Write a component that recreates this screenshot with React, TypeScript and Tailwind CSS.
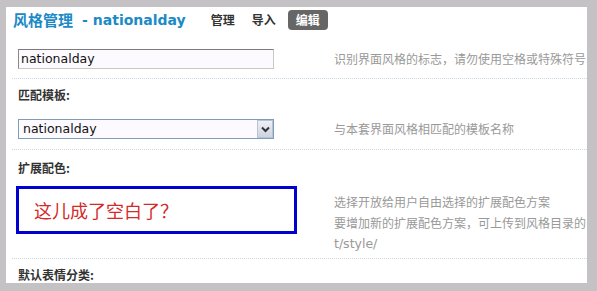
import React from "react";

const F = '"DejaVu Sans", Verdana, "Noto Sans CJK SC", sans-serif';
const CJK = '"Noto Sans CJK SC", "DejaVu Sans", sans-serif';

function Sep() {
  return <div className="border-t border-dotted border-[#c9d9e3]" />;
}

export default function App() {
  return (
    <div
      className="w-[597px] h-[291px] bg-[#c4c2c5] pt-[7px] pl-[6px] overflow-hidden"
      style={{ fontFamily: F }}
    >
      <div className="bg-white w-[581px] h-[276px] overflow-hidden">
        {/* Header */}
        <div className="mt-[3px] h-[20px] flex items-center pl-[7px] whitespace-nowrap">
          <span
            className="text-[15px] font-bold text-[#1b8ac6] leading-[20px]"
            style={{ fontFamily: CJK }}
          >
            风格管理
          </span>
          <span className="ml-[9px] text-[14px] font-bold text-[#1b8ac6] leading-[20px]">-</span>
          <span className="ml-[5px] text-[14px] font-bold text-[#1b8ac6] leading-[20px]">
            nationalday
          </span>
          <span
            className="ml-[25px] text-[12px] font-bold text-[#333] leading-[20px]"
            style={{ fontFamily: CJK }}
          >
            管理
          </span>
          <span
            className="ml-[17px] text-[12px] font-bold text-[#333] leading-[20px]"
            style={{ fontFamily: CJK }}
          >
            导入
          </span>
          <span
            className="ml-[12px] h-[20px] px-[8px] rounded-[4px] bg-[#666666] text-white text-[12px] font-bold leading-[20px]"
            style={{ fontFamily: CJK }}
          >
            编辑
          </span>
        </div>

        <div className="pl-[6px]">
          {/* Row 1 */}
          <div className="mt-[19px] pb-[9px] pl-[6px] flex items-center">
            <div className="w-[316px] shrink-0">
              <div className="w-[256px] h-[20px] border border-t-[#7b7b7b] border-l-[#8a8a8a] border-r-[#c8c8c8] border-b-[#c8c8c8] bg-[#fdfaff] flex items-center pl-[2px] text-[12.5px] text-[#111]">
                nationalday
              </div>
            </div>
            <div
              className="text-[12px] text-[#999] whitespace-nowrap leading-[20px]"
              style={{ fontFamily: CJK }}
            >
              识别界面风格的标志，请勿使用空格或特殊符号
            </div>
          </div>
          <Sep />

          {/* Row 2 */}
          <div className="pl-[6px] pt-[6px] pb-[10px]">
            <div
              className="h-[20px] leading-[20px] text-[12px] font-bold text-[#333]"
              style={{ fontFamily: CJK }}
            >
              匹配模板:
            </div>
            <div className="mt-[14px] flex items-center">
              <div className="w-[316px] shrink-0">
                <div className="w-[256px] h-[20px] border border-[#7f9db9] bg-[#fcfaff] flex items-center justify-between">
                  <span className="pl-[4px] text-[12.5px] text-[#111]">nationalday</span>
                  <span className="w-[16px] h-[18px] border border-[#b8c4d6] bg-gradient-to-b from-[#eef0f6] to-[#cdd3e0] flex items-center justify-center">
                    <svg width="9" height="7" viewBox="0 0 9 7">
                      <path d="M1 1.5 L4.5 5 L8 1.5" stroke="#333" strokeWidth="2" fill="none" />
                    </svg>
                  </span>
                </div>
              </div>
              <div
                className="text-[12px] text-[#999] whitespace-nowrap leading-[20px]"
                style={{ fontFamily: CJK }}
              >
                与本套界面风格相匹配的模板名称
              </div>
            </div>
          </div>
          <Sep />

          {/* Row 3 */}
          <div className="pl-[6px] pt-[8px] pb-[4px]">
            <div
              className="h-[20px] leading-[20px] text-[12px] font-bold text-[#333]"
              style={{ fontFamily: CJK }}
            >
              扩展配色:
            </div>
            <div className="mt-[8px] flex items-start">
              <div className="w-[316px] shrink-0 -ml-[2px]">
                <div className="w-[281px] h-[48px] border-[3px] border-[#0000d0] flex items-center pl-[15px]">
                  <span
                    className="text-[18px] text-[#d42a2a] leading-[20px]"
                    style={{ fontFamily: CJK }}
                  >
                    这儿成了空白了？
                  </span>
                </div>
              </div>
              <div
                className="mt-[5px] ml-[2px] text-[12px] text-[#999] whitespace-nowrap leading-[21px]"
                style={{ fontFamily: CJK }}
              >
                <div>选择开放给用户自由选择的扩展配色方案</div>
                <div>要增加新的扩展配色方案，可上传到风格目录的</div>
                <div className="text-[12.5px]" style={{ fontFamily: F }}>
                  t/style/
                </div>
              </div>
            </div>
          </div>
          <Sep />

          {/* Row 4 */}
          <div className="pl-[6px] pt-[6px]">
            <div
              className="h-[20px] leading-[20px] text-[12px] font-bold text-[#333]"
              style={{ fontFamily: CJK }}
            >
              默认表情分类:
            </div>
          </div>
        </div>
      </div>
    </div>
  );
}
